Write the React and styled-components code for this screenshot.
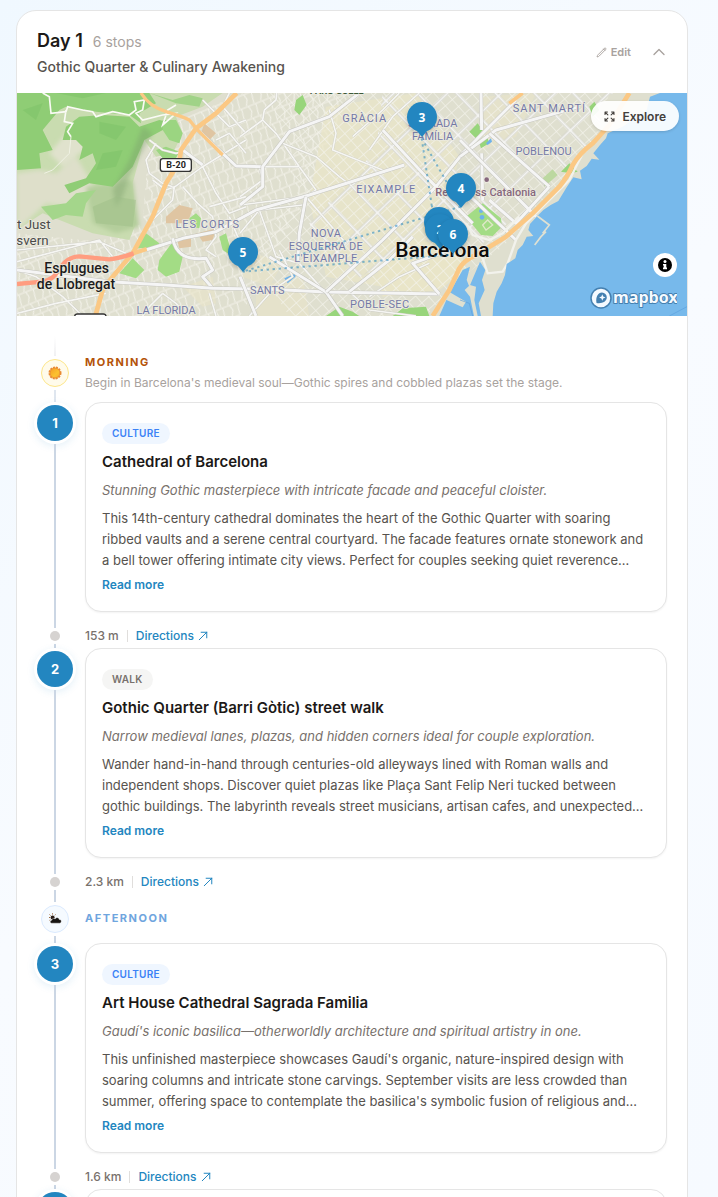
import React, { useState } from "react";
import styled, { createGlobalStyle } from "styled-components";
import {
  HiOutlinePencil,
  HiOutlineChevronUp,
  HiOutlineArrowUpRight,
  HiOutlineArrowsPointingOut,
} from "react-icons/hi2";

const GlobalStyle = createGlobalStyle`
  *, *::before, *::after {
    box-sizing: border-box;
  }

  body {
    margin: 0;
    font-family: Inter, "Liberation Sans", sans-serif;
    color: #1c1917;
  }

  h2, h3, p {
    margin: 0;
  }

  button {
    font-family: inherit;
    border: 0;
    padding: 0;
    background: none;
    cursor: pointer;
  }

  a {
    text-decoration: none;
  }
`;

const Page = styled.main`
  height: 100vh;
  overflow: hidden;
  padding: 10px 30px 0 16px;
  background: linear-gradient(135deg, #f0f8ff, #f8fbff 50%, #f6faff);
`;

const DayCard = styled.section`
  background: white;
  border: 1px solid #e5e5e5;
  border-radius: 20px;
  overflow: hidden;
`;

const Header = styled.header`
  display: flex;
  justify-content: space-between;
  align-items: center;
  padding: 16px 20px;
`;

const TitleRow = styled.div`
  display: flex;
  align-items: baseline;
  gap: 10px;
`;

const DayTitle = styled.h2`
  font-size: 18px;
  line-height: 28px;
  font-weight: 600;
`;

const StopCount = styled.span`
  font-size: 14px;
  line-height: 20px;
  color: #a8a29e;
`;

const Subtitle = styled.p`
  margin-top: 2px;
  font-size: 14px;
  line-height: 20px;
  font-weight: 500;
  color: #57534e;
`;

const Actions = styled.div`
  display: flex;
  align-items: center;
  gap: 20px;
  color: #a8a29e;
`;

const EditButton = styled.button`
  display: flex;
  align-items: center;
  gap: 4px;
  font-size: 11px;
  line-height: 16px;
  font-weight: 600;
  color: inherit;
`;

const ToggleButton = styled.button`
  display: flex;
  color: inherit;
`;

/* map */

const MapFrame = styled.div`
  position: relative;
  height: 223px;
  overflow: hidden;
  background: #77b9eb;
`;

const MapDrawing = styled.svg`
  display: block;
  width: 670px;
  height: 223px;
  font-family: Roboto, sans-serif;
`;

const Pin = styled.button`
  position: absolute;
  left: ${(props) => props.$x}px;
  top: ${(props) => props.$y}px;
  width: 30px;
  height: 30px;
  border-radius: 50%;
  background: #2386c0;
  color: white;
  font-family: "Open Sans", sans-serif;
  font-size: 12px;
  font-weight: 700;
  box-shadow: 0 2px 4px rgba(0, 0, 0, 0.2);
  transform: translate(-50%, -50%);

  &::after {
    content: "";
    position: absolute;
    left: 10px;
    top: 29px;
    border: 5px solid transparent;
    border-top: 6px solid #2386c0;
    border-bottom: 0;
  }
`;

const ExploreButton = styled.button`
  position: absolute;
  top: 8px;
  right: 8px;
  height: 30px;
  display: flex;
  align-items: center;
  gap: 6px;
  padding: 0 13px 0 12px;
  border-radius: 15px;
  background: rgba(255, 255, 255, 0.92);
  color: #44403c;
  font-size: 12px;
  font-weight: 600;
  box-shadow: 0 1px 3px rgba(0, 0, 0, 0.15);
`;

const InfoButton = styled.button`
  position: absolute;
  right: 10px;
  bottom: 39px;
  width: 24px;
  height: 24px;
  display: flex;
  align-items: center;
  justify-content: center;
  border-radius: 50%;
  background: white;
`;

const MapboxLink = styled.a`
  position: absolute;
  right: 10px;
  bottom: 6px;
  display: flex;
`;

/* timeline */

const Timeline = styled.div`
  padding: 20px;
`;

const Row = styled.div`
  display: grid;
  grid-template-columns: 36px minmax(0, 1fr);
  column-gap: 12px;
`;

const Rail = styled.div`
  display: flex;
  flex-direction: column;
  align-items: center;
`;

const Line = styled.div`
  width: 2px;
  background: ${(props) => props.$color || "#cbd6e4"};
  ${(props) => (props.$size ? `height: ${props.$size}px;` : "flex: 1;")}
`;

const PeriodIcon = styled.div`
  width: 28px;
  height: 28px;
  margin: 3px 0;
  display: flex;
  align-items: center;
  justify-content: center;
  border-radius: 50%;
  border: 1px solid ${(props) => props.$border};
  background: ${(props) => props.$fill};
`;

const PeriodText = styled.div`
  padding: ${(props) => (props.$first ? "18px 0 10px" : "16px 0 17px")};
`;

const PeriodLabel = styled.h3`
  font-size: 11px;
  line-height: 16px;
  font-weight: 700;
  letter-spacing: 0.14em;
  text-transform: uppercase;
  color: ${(props) => props.$color};
`;

const PeriodNote = styled.p`
  margin-top: 4px;
  font-size: 12px;
  line-height: 18px;
  color: #a8a29e;
`;

const Badge = styled.div`
  width: 36px;
  height: 36px;
  margin: 3px 0;
  display: flex;
  flex-shrink: 0;
  align-items: center;
  justify-content: center;
  border-radius: 50%;
  background: #2386c0;
  color: white;
  font-size: 13px;
  font-weight: 700;
  box-shadow: 0 0 0 3px white, 0 2px 8px 2px rgba(35, 134, 192, 0.15);
`;

const StopCard = styled.article`
  min-height: 210px;
  padding: 20px 16px 16px;
  border: 1px solid #e5e5e5;
  border-radius: 16px;
  background: white;
  box-shadow: 0 1px 2px rgba(0, 0, 0, 0.05);
`;

const Tag = styled.span`
  display: block;
  width: fit-content;
  padding: 3px 10px;
  border-radius: 11px;
  font-size: 10px;
  line-height: 15px;
  font-weight: 600;
  letter-spacing: 0.025em;
  text-transform: uppercase;
  color: ${(props) => (props.$kind === "Culture" ? "#3b82f6" : "#78716c")};
  background: ${(props) => (props.$kind === "Culture" ? "#eff6ff" : "#f5f5f4")};
`;

const StopTitle = styled.h3`
  margin-top: 8px;
  font-size: 15px;
  line-height: 20px;
  font-weight: 600;
`;

const Tagline = styled.p`
  margin-top: 8px;
  font-size: 13px;
  line-height: 20px;
  font-style: italic;
  color: #78716c;
`;

const Description = styled.p`
  margin-top: 8px;
  font-size: 13px;
  line-height: 21px;
  color: #57534e;
`;

const ReadMore = styled.button`
  display: block;
  margin-top: 4px;
  font-size: 12px;
  line-height: 20px;
  font-weight: 600;
  color: #2386c0;
`;

const Dot = styled.div`
  width: 10px;
  height: 10px;
  margin: 3px 0;
  border-radius: 50%;
  background: #d6d3d1;
`;

const Transit = styled.div`
  display: flex;
  align-items: center;
  gap: 8px;
  padding: 16px 0 4px;
  font-size: 12px;
  line-height: 16px;
  font-weight: 500;
  color: #78716c;
`;

const Divider = styled.span`
  width: 1px;
  height: 12px;
  background: #e0dedc;
`;

const DirectionsLink = styled.a`
  display: flex;
  align-items: center;
  gap: 3px;
  color: #2386c0;
`;

const periods = [
  {
    name: "Morning",
    note: "Begin in Barcelona's medieval soul—Gothic spires and cobbled plazas set the stage.",
    color: "#b45309",
    border: "#fde68a",
    fill: "#fffbeb",
    stops: [
      {
        number: 1,
        kind: "Culture",
        title: "Cathedral of Barcelona",
        tagline:
          "Stunning Gothic masterpiece with intricate facade and peaceful cloister.",
        text: "This 14th-century cathedral dominates the heart of the Gothic Quarter with soaring ribbed vaults and a serene central courtyard. The facade features ornate stonework and a bell tower offering intimate city views. Perfect for couples seeking quiet reverence…",
        distance: "153 m",
      },
      {
        number: 2,
        kind: "Walk",
        title: "Gothic Quarter (Barri Gòtic) street walk",
        tagline:
          "Narrow medieval lanes, plazas, and hidden corners ideal for couple exploration.",
        text: "Wander hand-in-hand through centuries-old alleyways lined with Roman walls and independent shops. Discover quiet plazas like Plaça Sant Felip Neri tucked between gothic buildings. The labyrinth reveals street musicians, artisan cafes, and unexpected…",
        distance: "2.3 km",
      },
    ],
  },
  {
    name: "Afternoon",
    color: "#6fa5de",
    border: "#dbeafe",
    fill: "#f5faff",
    stops: [
      {
        number: 3,
        kind: "Culture",
        title: "Art House Cathedral Sagrada Familia",
        tagline:
          "Gaudí's iconic basilica—otherworldly architecture and spiritual artistry in one.",
        text: "This unfinished masterpiece showcases Gaudí's organic, nature-inspired design with soaring columns and intricate stone carvings. September visits are less crowded than summer, offering space to contemplate the basilica's symbolic fusion of religious and…",
        distance: "1.6 km",
      },
      { number: 4 },
    ],
  },
];

const pins = [
  { number: 3, x: 405, y: 24 },
  { number: 4, x: 444, y: 95 },
  { number: 5, x: 226, y: 159 },
  { number: 1, x: 422, y: 129 },
  { number: 2, x: 423, y: 136 },
  { number: 6, x: 436, y: 141 },
];

const districts = [
  { text: "LES CORTS", x: 575, y: 415, spacing: 3 },
  { text: "LA FLORIDA", x: 450, y: 671, spacing: 0 },
  { text: "GRÀCIA", x: 1046, y: 95, spacing: 3 },
  { text: "EIXAMPLE", x: 1111, y: 309, spacing: 3 },
  { text: "NOVA", x: 930, y: 441, spacing: 1 },
  { text: "ESQUERRA DE", x: 930, y: 479, spacing: 1 },
  { text: "L'EIXAMPLE", x: 930, y: 516, spacing: 1 },
  { text: "SANTS", x: 754, y: 612, spacing: 0 },
  { text: "POBLE-SEC", x: 1091, y: 653, spacing: 1 },
  { text: "SAGRADA", x: 1250, y: 110, spacing: 0 },
  { text: "FAMÍLIA", x: 1250, y: 150, spacing: 0 },
  { text: "SANT MARTÍ", x: 1600, y: 65, spacing: 3 },
  { text: "POBLENOU", x: 1583, y: 195, spacing: 0 },
];

const minorRoads = [
  "M3 480L250 455L330 490M3 515L60 500L250 450L290 500M3 540L60 560L140 620L200 678M3 670L120 640L270 610",
  "M410 390L470 330L475 290L450 300L410 270M470 295L560 230L690 150M500 180L560 230L600 310L640 370L690 350",
  "M500 290L545 340L590 380L600 440L570 480L600 500M580 350L690 320M640 380L665 440L720 470",
  "M400 150L440 180L480 190L500 185M420 160L390 210L400 250L440 280L470 290M560 30L600 70L640 110L690 90",
  "M640 9L620 50L690 130M600 150L640 130L690 190M580 610L600 678M440 610L400 650L380 678M440 610L480 640L520 678",
  "M672 140L740 90L745 60L780 30L782 9M672 230L730 230L740 270L672 320M740 90L780 130L850 230L740 230",
  "M850 230L900 300L870 320L990 460M800 160L900 200L970 260L1010 290M940 60L960 130L950 180L1100 240",
  "M672 345L870 320M672 430L730 360L860 345M730 360L780 500L850 520L930 610M790 480L830 560L770 600L700 678",
  "M1060 620L1150 560L1240 520M1000 605L1060 660L1200 678M1150 9L1100 60L1010 140M1210 9L1130 80L1060 180",
];

const mainRoads = [
  "M390 480L500 445L600 425L720 360L880 315L1165 225",
  "M540 115L660 228L740 230M500 180L560 225",
  "M470 445C480 500 520 510 570 505L590 540L560 560L590 595",
  "M3 540L280 575L450 585L590 595L760 598L930 606L1270 612",
  "M672 560L720 678M672 345L740 290L740 230L820 125L940 80L1030 9",
  "M760 500L930 606L980 678M870 320L850 430L845 520",
  "M930 606L1100 450L1260 290L1340 190L1500 30M1100 120L1230 260L1370 400",
  "M1270 612L1190 520L1330 470M1000 605L1120 510L1190 440",
  "M1395 9L1397 120M1332 200L1440 120L1690 50M1397 190L1400 330",
  "M1420 130L1600 290M1600 290L1500 400L1420 330M1332 150L1560 380M1332 290L1500 450",
];

function CityMap() {
  return (
    <MapDrawing
      viewBox="3 9 2010 669"
      preserveAspectRatio="xMinYMin slice"
      role="img"
      aria-label="Map of Barcelona"
    >
      <defs>
        <pattern
          id="blocks"
          width="28"
          height="28"
          patternUnits="userSpaceOnUse"
          patternTransform="rotate(-42)"
        >
          <path d="M0 0H28M0 0V28" stroke="#f3f2ea" strokeWidth="4" />
        </pattern>
        <pattern
          id="avenues"
          width="84"
          height="112"
          patternUnits="userSpaceOnUse"
          patternTransform="rotate(-44)"
        >
          <path d="M0 10H84M20 0V112" stroke="#cbcbc2" strokeWidth="9" />
          <path d="M0 10H84M20 0V112" stroke="#f5f5f3" strokeWidth="6" />
        </pattern>
        <pattern
          id="lanes"
          width="46"
          height="38"
          patternUnits="userSpaceOnUse"
          patternTransform="rotate(-22)"
        >
          <path d="M0 3H46M8 3L3 38M30 3L34 20L25 38" fill="none" stroke="#f3f2ea" strokeWidth="3" />
        </pattern>
        <filter id="soft">
          <feGaussianBlur stdDeviation="7" />
        </filter>
      </defs>

      <rect x="3" y="9" width="2010" height="669" fill="#dfdfcf" />

      {/* street grids */}
      <path d="M3 430L250 455L380 400L400 130L560 60L680 9H1000L870 320L672 678H3Z" fill="url(#lanes)" />
      <path d="M930 50L1200 9L1330 200L1280 400L1100 590L930 560L880 330Z" fill="#e9e5c8" opacity=".75" />
      <path d="M1400 20L1560 9L1500 140L1400 180ZM720 590L860 560L880 678H720ZM500 590L590 560L600 640L560 650ZM690 480L800 520L760 590L680 560Z" fill="#e9e5c8" opacity=".6" />
      <path d="M1140 440L1330 470L1350 540L1270 600L1100 620L1080 520Z" fill="#e9e5c8" />
      <path d="M760 9H1780L1740 150L1600 330L1460 470L1340 560L1230 678H820L700 500L850 300Z" fill="url(#blocks)" />
      <path d="M1100 9H1790L1720 160L1560 330L1400 460L1200 470L960 600L880 400L1080 180Z" fill="url(#avenues)" />

      {/* hills */}
      <path d="M3 9H620L560 50L480 80L500 130L470 190L420 200L385 150L350 280L360 400L340 450L230 430L80 370L3 420Z" fill="#c9dcb0" />
      <g filter="url(#soft)">
        <path d="M3 250L70 240L120 250L180 200L240 300L150 350L90 340L3 420Z" fill="#dedfca" />
        <path d="M100 190L160 120L260 90L230 160L140 230Z" fill="#e0e2cd" />
        <path d="M210 290L350 270L370 410L300 430L230 400Z" fill="#b4ce9b" />
      </g>
      <path d="M3 9H100L130 60L80 120L110 180L70 190L75 235L3 240Z" fill="#8fcd75" />
      <path d="M95 9H400L420 40L370 70L375 100L340 75L240 65L150 50L110 70Z" fill="#92cf79" />
      <path d="M150 110L190 80L260 75L340 80L370 110L430 90L470 100L450 115L385 150L350 230L290 290L220 280L160 310L145 285L210 265L240 220L230 190L190 210L200 170L180 150L140 150Z" fill="#8fcd75" />
      <path d="M75 350L150 340L180 310L240 300L210 340L200 380L150 375L110 390Z" fill="#a4d68b" />
      <path d="M120 9L200 25L270 9ZM250 95L330 110L300 150L250 130ZM20 60L80 40L60 90ZM260 190L320 180L300 230L240 240Z" fill="#7dc267" opacity=".55" />
      <path d="M380 110L410 130L370 200L340 260L320 320L300 350L290 300L340 210Z" fill="#7c9f6c" opacity=".4" filter="url(#soft)" />
      <path d="M230 350L300 320L360 330L350 410L240 400Z" fill="#9cbd84" opacity=".45" />
      <path d="M400 9L470 30L520 15L560 25L550 50L480 40Z" fill="#a0d387" />
      <path d="M440 90L480 90L500 130L490 160L460 150L440 120ZM420 180L450 170L490 185L480 205L440 205Z" fill="#9bd581" />

      {/* parks and campuses */}
      <path d="M390 430L430 460L420 475L355 475ZM310 550L350 505L385 540L360 565ZM430 510L470 455L500 500L490 545L450 560L425 540ZM520 385L540 370L555 385L550 415L525 410ZM610 440L630 430L650 500L620 480Z" fill="#a3dc85" />
      <path d="M840 30L860 15L872 45L850 75L835 60ZM930 678L970 650L1010 665L1030 678ZM1130 678L1160 655L1230 650L1240 678Z" fill="#98d57b" />
      <path d="M450 380L490 345L530 355L520 385L500 400L450 400ZM525 435L600 415L590 450L560 455L550 440ZM485 455L525 440L525 470L490 475ZM565 100L600 130L580 150L555 130Z" fill="#dfc5a2" />
      <path d="M1350 380L1400 340L1455 385L1458 410L1430 438L1395 435Z" fill="#a3dc85" />
      <path d="M1360 125L1385 100L1400 120L1380 145ZM1720 50L1735 35L1750 60L1730 80ZM1390 160L1415 145L1420 160L1395 175ZM1635 245L1660 220L1685 245L1665 250Z" fill="#98d57b" />
      <path d="M1580 265L1610 238L1625 255L1585 290Z" fill="#bcd8a0" />
      <path d="M1400 405L1415 390L1430 405L1410 420Z" fill="none" stroke="#dfe8c8" strokeWidth="4" />
      <path d="M805 565L840 550L838 560L815 580ZM1410 160L1425 145L1428 155L1415 165Z" fill="#6fb2ea" />
      <circle cx="1395" cy="363" r="6" fill="#6fb2ea" />
      <circle cx="1398" cy="382" r="7" fill="#6fb2ea" />

      {/* roads */}
      {minorRoads.map((d) => (
        <g key={d} fill="none" strokeLinejoin="round">
          <path d={d} stroke="#cbcbc2" strokeWidth="7" />
          <path d={d} stroke="#f6f6f3" strokeWidth="5" />
        </g>
      ))}
      {mainRoads.map((d) => (
        <g key={d} fill="none" strokeLinejoin="round">
          <path d={d} stroke="#c6c6bf" strokeWidth="12" />
          <path d={d} stroke="#f5f5f5" strokeWidth="9" />
        </g>
      ))}
      <path d="M1790 100L1700 190L1660 270L1600 330L1530 400L1500 450L1475 520L1460 545L1415 550L1395 490M1350 400L1370 435L1420 450L1460 430L1510 380" fill="none" stroke="#f2f2ec" strokeWidth="7" />

      {/* sea and harbour */}
      <path
        d="M1932 9L1902 20L1892 60L1820 110L1775 130L1770 145L1752 165L1732 190L1750 209L1727 206L1712 228L1692 242L1697 268L1672 262L1652 292L1627 333L1604 345L1582 360L1564 378L1542 402L1537 420L1552 438L1532 440L1520 465L1505 480L1498 505L1472 522L1467 555L1457 580L1442 605L1432 640L1430 678H2013V9Z"
        fill="#77b9eb"
      />
      <path d="M1270 678L1300 610L1340 540L1362 530L1352 570L1360 590L1392 515L1408 540L1398 570L1406 600L1388 640L1395 678Z" fill="#77b9eb" />
      <path d="M1290 600L1350 635L1340 652L1280 625Z" fill="#e0e0d0" />
      <path d="M1346 600L1362 585L1380 590L1375 630L1385 678H1374L1362 620Z" fill="#e0e0d0" />
      <path d="M1564 378L1600 405L1580 430M1556 465L1575 440L1590 425" fill="none" stroke="#dfe0d2" strokeWidth="5" />
      <path d="M1332 630L1360 640L1370 678M1960 678L2013 650" fill="none" stroke="#5ca0de" strokeWidth="2" />

      <path
        d="M80 9L100 20L105 70L150 65L155 50L200 60L230 65L240 80L290 65L340 75L360 60L355 35L385 30L380 60L360 70L380 90L440 75L480 70L440 105L455 60L480 45M150 60L145 95L170 100L155 125L165 140"
        fill="none"
        stroke="#fafaf5"
        strokeWidth="5"
      />
      <path d="M165 140L160 190L110 240L85 250" fill="none" stroke="#f0f2e4" strokeWidth="3" />
      <g fill="none" strokeLinejoin="round">
        <path d="M375 9Q400 50 450 65T520 90L540 115L620 195" stroke="#fbc884" strokeWidth="10" />
        <path d="M662 9L600 70L540 115L495 180L490 215L450 280L410 380L350 490L290 560L260 600L238 678" stroke="#fbc884" strokeWidth="14" />
        <path d="M340 494L392 477" stroke="#fbc884" strokeWidth="12" />
        <path d="M3 582L80 575Q110 570 125 545Q150 500 190 499L280 508Q310 505 353 490" stroke="#ff9d80" strokeWidth="13" />
        <path d="M1250 678L1300 600L1330 535Q1345 510 1380 495L1470 440L1550 370L1630 290Q1655 260 1670 225Q1690 190 1730 160L1780 105L1840 9" stroke="#fbc884" strokeWidth="14" />
        <path d="M1480 40L1520 9" stroke="#fbc884" strokeWidth="11" />
      </g>

      {/* place names */}
      <g
        fontSize="33"
        fill="#7479a6"
        stroke="#ecebe0"
        strokeWidth="5"
        paintOrder="stroke"
        textAnchor="middle"
        strokeLinejoin="round"
      >
        {districts.map((d) => (
          <text key={d.text} x={d.x} y={d.y} letterSpacing={d.spacing}>
            {d.text}
          </text>
        ))}
      </g>
      <g stroke="#ecebe0" strokeWidth="5" paintOrder="stroke" strokeLinejoin="round">
        <g fontSize="33" fill="#86687d" fontWeight="500">
          <text x="1258" y="318">Re</text>
          <text x="1378" y="318">ss Catalonia</text>
        </g>
        <circle cx="1412" cy="269" r="7" fill="#86687d" />
        <g fontSize="40" fill="#4a4a4a">
          <text x="3" y="416">t Just</text>
          <text x="1" y="465">svern</text>
        </g>
        <g fontSize="42" fill="#1c1c1c" fontWeight="500" textAnchor="middle">
          <text x="182" y="550">Esplugues</text>
          <text x="180" y="598">de Llobregat</text>
        </g>
        <text x="1279" y="500" fontSize="63" fontWeight="500" fill="#0c0c0c" textAnchor="middle">
          Barcelona
        </text>
        <text x="962" y="12" fontSize="28" fontWeight="700" fill="#3f5a3a" textAnchor="middle">
          PARC GÜELL
        </text>
      </g>
      <rect x="433" y="206" width="93" height="38" rx="8" fill="white" stroke="#333" strokeWidth="4" />
      <text x="480" y="235" fontSize="27" fontWeight="700" textAnchor="middle" fill="#222">
        B-20
      </text>
      <rect x="176" y="672" width="94" height="38" rx="8" fill="white" stroke="#333" strokeWidth="4" />

      <path
        d="M1217 145L1247 345M1217 145L1334 350M1334 350L680 545M680 545L1312 494M1247 345L1272 470"
        fill="none"
        stroke="#2386c0"
        strokeOpacity=".55"
        strokeWidth="6"
        strokeDasharray="7 11"
      />
    </MapDrawing>
  );
}

function MapboxLogo() {
  return (
    <svg width="88" height="24" viewBox="0 0 88 24" aria-hidden="true">
      <circle cx="12" cy="12" r="10" fill="#f5faff" stroke="#4580b0" strokeWidth="1.5" />
      <path d="M7.500 17C6.500 11 9 6.500 13 6.500A5 5 0 0 1 17.800 11.500C17.800 15.500 13 18 7.500 17Z" fill="#4580b0" />
      <path d="M13.300 8.300L14.200 10.600L16.500 11.500L14.200 12.400L13.300 14.700L12.400 12.400L10.100 11.500L12.400 10.600Z" fill="#f5faff" />
      <text
        x="24"
        y="17"
        fontFamily="Open Sans, sans-serif"
        fontSize="16"
        fontWeight="700"
        fill="#f5faff"
        stroke="#4580b0"
        strokeWidth="2"
        paintOrder="stroke"
        strokeLinejoin="round"
      >
        mapbox
      </text>
    </svg>
  );
}

function SunIcon() {
  return (
    <svg width="14" height="14" viewBox="0 0 14 14" aria-hidden="true">
      <defs>
        <linearGradient id="sun" x1="0" y1="0" x2="1" y2="1">
          <stop offset="0" stopColor="#f59b25" />
          <stop offset=".6" stopColor="#fcc12f" />
          <stop offset="1" stopColor="#f8a928" />
        </linearGradient>
      </defs>
      <circle cx="7" cy="7" r="5.500" fill="none" stroke="#e98a35" strokeWidth="2" strokeDasharray="2 .9" />
      <circle cx="7" cy="7" r="5" fill="url(#sun)" stroke="#ea8d2f" />
    </svg>
  );
}

function CloudIcon() {
  return (
    <svg width="14" height="12" viewBox="0 0 14 12" aria-hidden="true">
      <path d="M1 4.500H2M1.500 1.500L2.500 2.500M4.500 .3V1.500M7.500 1.500L6.800 2.300M1.500 7.300L2.300 6.600" stroke="#a06a3c" strokeWidth="1" />
      <circle cx="4.600" cy="4.600" r="2" fill="#2a1d17" />
      <path d="M3.500 10.200C1.800 10 1.700 7.500 3.600 7.300C3.900 5.300 6.300 5 7.100 6C8 4 11 4.300 11.200 6.500C13.800 6.300 14 10 11.700 10.200Z" fill="#171412" stroke="white" strokeWidth=".4" />
    </svg>
  );
}

function Stop({ stop }) {
  return (
    <>
      <Row>
        <Rail>
          <Badge>{stop.number}</Badge>
          <Line />
        </Rail>
        <StopCard>
          {stop.title && (
            <>
              <Tag $kind={stop.kind}>{stop.kind}</Tag>
              <StopTitle>{stop.title}</StopTitle>
              <Tagline>{stop.tagline}</Tagline>
              <Description>{stop.text}</Description>
              <ReadMore>Read more</ReadMore>
            </>
          )}
        </StopCard>
      </Row>
      {stop.distance && (
        <Row>
          <Rail>
            <Line $size={16} />
            <Dot />
            <Line />
          </Rail>
          <Transit>
            <span>{stop.distance}</span>
            <Divider />
            <DirectionsLink href="#directions">
              Directions
              <HiOutlineArrowUpRight size={12} strokeWidth={2} />
            </DirectionsLink>
          </Transit>
        </Row>
      )}
    </>
  );
}

function App() {
  const [open, setOpen] = useState(true);

  return (
    <>
      <GlobalStyle />
      <Page>
        <DayCard>
          <Header>
            <div>
              <TitleRow>
                <DayTitle>Day 1</DayTitle>
                <StopCount>6 stops</StopCount>
              </TitleRow>
              <Subtitle>Gothic Quarter &amp; Culinary Awakening</Subtitle>
            </div>
            <Actions>
              <EditButton>
                <HiOutlinePencil size={11} strokeWidth={2} />
                Edit
              </EditButton>
              <ToggleButton
                aria-label="Toggle day"
                aria-expanded={open}
                onClick={() => setOpen((prev) => !prev)}
              >
                <HiOutlineChevronUp size={16} strokeWidth={2} />
              </ToggleButton>
            </Actions>
          </Header>
          {open && (
            <>
              <MapFrame>
                <CityMap />
                {pins.map((pin) => (
                  <Pin key={pin.number} $x={pin.x} $y={pin.y}>
                    {pin.number}
                  </Pin>
                ))}
                <ExploreButton>
                  <HiOutlineArrowsPointingOut size={13} strokeWidth={2} />
                  Explore
                </ExploreButton>
                <InfoButton aria-label="Map attribution">
                  <svg width="14" height="14" viewBox="0 0 14 14">
                    <circle cx="7" cy="7" r="7" />
                    <circle cx="7" cy="3.500" r="1.500" fill="white" />
                    <path d="M5 6H8.300V9.500H9V11.200H5V9.500H5.700V7.500H5Z" fill="white" />
                  </svg>
                </InfoButton>
                <MapboxLink href="#mapbox" aria-label="Mapbox">
                  <MapboxLogo />
                </MapboxLink>
              </MapFrame>
              <Timeline>
                {periods.map((period, index) => (
                  <React.Fragment key={period.name}>
                    <Row>
                      <Rail>
                        <Line
                          $size={index === 0 ? 20 : 8}
                          $color={
                            index === 0 &&
                            "linear-gradient(transparent, #f0f0f2)"
                          }
                        />
                        <PeriodIcon $border={period.border} $fill={period.fill}>
                          {index === 0 ? <SunIcon /> : <CloudIcon />}
                        </PeriodIcon>
                        <Line $color={index === 0 && "#dfe6ef"} />
                      </Rail>
                      <PeriodText $first={index === 0}>
                        <PeriodLabel $color={period.color}>
                          {period.name}
                        </PeriodLabel>
                        {period.note && <PeriodNote>{period.note}</PeriodNote>}
                      </PeriodText>
                    </Row>
                    {period.stops.map((stop) => (
                      <Stop key={stop.number} stop={stop} />
                    ))}
                  </React.Fragment>
                ))}
              </Timeline>
            </>
          )}
        </DayCard>
      </Page>
    </>
  );
}

export default App;
